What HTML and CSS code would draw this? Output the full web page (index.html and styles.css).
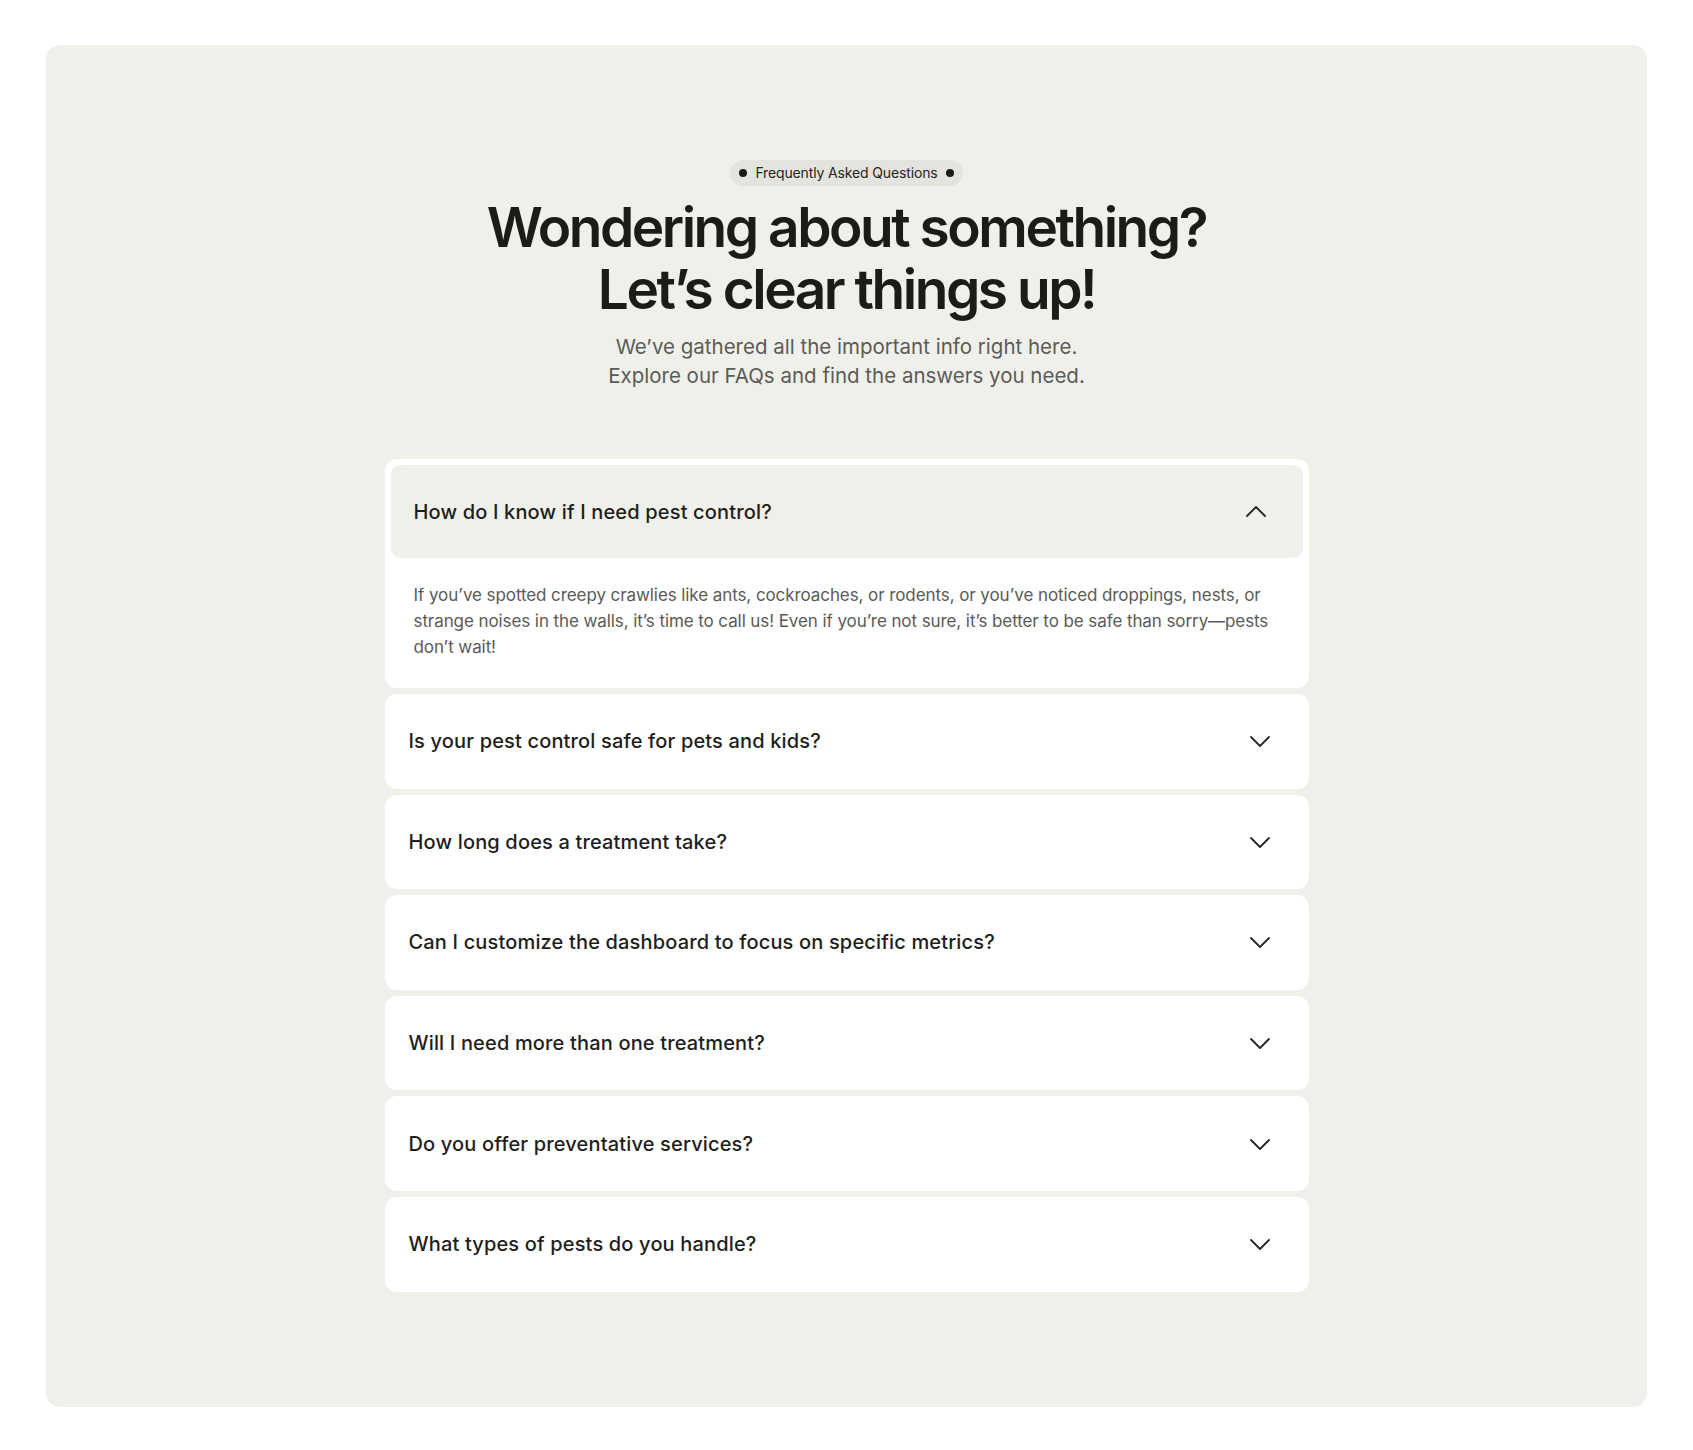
FILE: index.html
```html
<!DOCTYPE html>
<html lang="en">
<head>
<meta charset="utf-8">
<title>FAQ</title>
<link rel="stylesheet" href="styles.css">
</head>
<body>
<section class="panel">
  <div class="intro">
    <div class="badge"><span class="dot"></span><span class="badge-text">Frequently Asked Questions</span><span class="dot"></span></div>
    <h1 class="title">Wondering about something?<br>Let’s clear things up!</h1>
    <p class="subtitle">We’ve gathered all the important info right here.<br>Explore our FAQs and find the answers you need.</p>
  </div>
  <div class="faq-list">
    <div class="faq open">
      <div class="faq-head">
        <span class="q">How do I know if I need pest control?</span>
        <svg class="chev" viewBox="0 0 24 24" width="24" height="24"><path d="M3 16l9-9 9 9"/></svg>
      </div>
      <div class="faq-answer">If you’ve spotted creepy crawlies like ants, cockroaches, or rodents, or you’ve noticed droppings, nests, or strange noises in the walls, it’s time to call us! Even if you’re not sure, it’s better to be safe than sorry—pests don’t wait!</div>
    </div>
    <div class="faq">
      <div class="faq-head"><span class="q">Is your pest control safe for pets and kids?</span><svg class="chev" viewBox="0 0 24 24" width="24" height="24"><path d="M3 8l9 9 9-9"/></svg></div>
    </div>
    <div class="faq">
      <div class="faq-head"><span class="q">How long does a treatment take?</span><svg class="chev" viewBox="0 0 24 24" width="24" height="24"><path d="M3 8l9 9 9-9"/></svg></div>
    </div>
    <div class="faq">
      <div class="faq-head"><span class="q">Can I customize the dashboard to focus on specific metrics?</span><svg class="chev" viewBox="0 0 24 24" width="24" height="24"><path d="M3 8l9 9 9-9"/></svg></div>
    </div>
    <div class="faq">
      <div class="faq-head"><span class="q">Will I need more than one treatment?</span><svg class="chev" viewBox="0 0 24 24" width="24" height="24"><path d="M3 8l9 9 9-9"/></svg></div>
    </div>
    <div class="faq">
      <div class="faq-head"><span class="q">Do you offer preventative services?</span><svg class="chev" viewBox="0 0 24 24" width="24" height="24"><path d="M3 8l9 9 9-9"/></svg></div>
    </div>
    <div class="faq">
      <div class="faq-head"><span class="q">What types of pests do you handle?</span><svg class="chev" viewBox="0 0 24 24" width="24" height="24"><path d="M3 8l9 9 9-9"/></svg></div>
    </div>
  </div>
</section>
</body>
</html>
```

FILE: styles.css
```css
* { box-sizing: border-box; }
html, body { margin: 0; padding: 0; background: #ffffff; }
body {
  font-family: Inter, "Noto Sans", "Liberation Sans", sans-serif;
  color: #1d1d1b;
}
.panel {
  margin: 45px 46px 43px;
  background: #f0f0ea;
  border-radius: 14px;
  padding: 115px 0 115px;
  display: flex;
  flex-direction: column;
  align-items: center;
}
.intro {
  display: flex;
  flex-direction: column;
  align-items: center;
  text-align: center;
}
.badge {
  display: flex;
  align-items: center;
  gap: 8px;
  height: 26px;
  padding: 0 9px;
  border-radius: 13px;
  background: #e4e4de;
}
.dot {
  width: 8px;
  height: 8px;
  border-radius: 50%;
  background: #1a1a18;
}
.badge-text {
  font-size: 14px;
  letter-spacing: -0.01em;
  color: #242422;
  line-height: 1;
}
.title {
  margin: 10px 0 0;
  font-size: 55px;
  line-height: 62px;
  font-weight: 600;
  letter-spacing: -0.045em;
  color: #1b1b19;
}
.subtitle {
  margin: 12px 0 0;
  font-size: 20.5px;
  line-height: 29px;
  color: #5b5b58;
  letter-spacing: 0;
}
.faq-list {
  margin-top: 69px;
  width: 924px;
  display: flex;
  flex-direction: column;
  gap: 6px;
}
.faq {
  background: #ffffff;
  border-radius: 12px;
}
.faq.open { padding: 6px 6px 6px; }
.faq-head {
  display: flex;
  align-items: center;
  justify-content: space-between;
  height: 94.6px;
  padding: 0 37px 0 24px;
}
.faq.open .faq-head {
  background: #f0f0ea;
  border-radius: 10px;
  height: 93px;
  padding: 0 35px 0 23px;
}
.q {
  font-size: 20px;
  line-height: 24px;
  font-weight: 500;
  color: #1e1e1c;
  letter-spacing: 0.008em;
}
.chev {
  flex: none;
  fill: none;
  stroke: #2a2a28;
  stroke-width: 1.9;
  stroke-linecap: round;
  stroke-linejoin: round;
}
.faq-answer {
  padding: 24px 23px 22px;
  font-size: 17px;
  line-height: 26px;
  color: #5a5a57;
  letter-spacing: -0.005em;
}
```
